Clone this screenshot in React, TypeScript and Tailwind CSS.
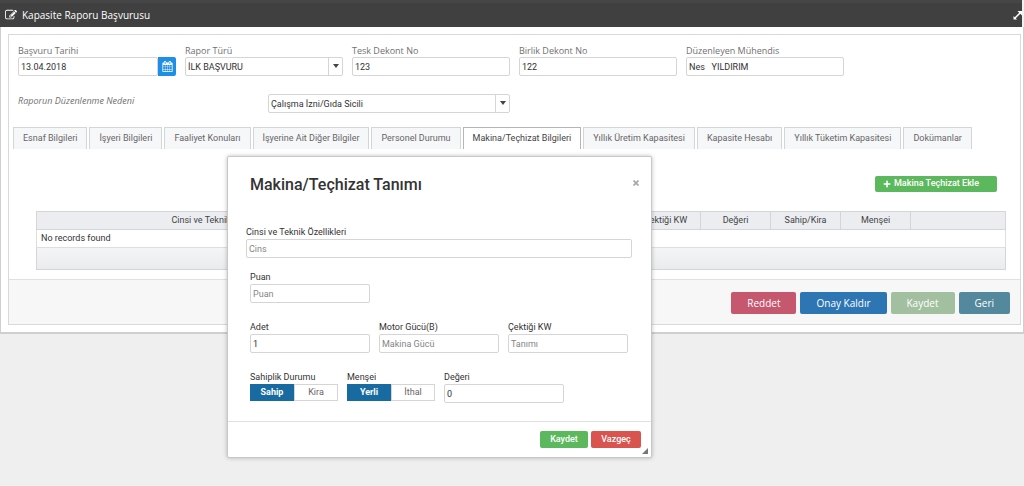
import React, { useState } from "react";
import { FaPlus } from "react-icons/fa";

const tabs = [
  "Esnaf Bilgileri",
  "İşyeri Bilgileri",
  "Faaliyet Konuları",
  "İşyerine Ait Diğer Bilgiler",
  "Personel Durumu",
  "Makina/Teçhizat Bilgileri",
  "Yıllık Üretim Kapasitesi",
  "Kapasite Hesabı",
  "Yıllık Tüketim Kapasitesi",
  "Dokümanlar",
];

const columns = [
  { name: "Cinsi ve Teknik Özellikleri", class: "" },
  { name: "Puan", class: "w-[70px]" },
  { name: "Adet", class: "w-[70px]" },
  { name: "Motor Gücü", class: "w-[84px]" },
  { name: "Çektiği KW", class: "w-[70px]" },
  { name: "Değeri", class: "w-[70px]" },
  { name: "Sahip/Kira", class: "w-[70px]" },
  { name: "Menşei", class: "w-[70px]" },
  { name: "", class: "w-[95px]" },
];

const actions = [
  { name: "Reddet", class: "bg-[#c5576f]" },
  { name: "Onay Kaldır", class: "bg-[#2e75b3]" },
  { name: "Kaydet", class: "bg-[#a2bf9f]" },
  { name: "Geri", class: "bg-[#54889d]" },
];

const EditIcon = () => (
  <svg viewBox="0 0 1792 1792" className="w-3 h-3 fill-white" aria-hidden="true">
    <path d="M888 1184l116-116-152-152-116 116v56h96v96h56zm440-720q-16-16-33 1l-350 350q-17 17-1 33t33-1l350-350q17-17 1-33zm80 594v190q0 119-84.5 203.5t-203.5 84.5h-832q-119 0-203.5-84.5t-84.5-203.5v-832q0-119 84.5-203.5t203.5-84.5h832q63 0 117 25 15 7 18 23 3 17-9 29l-49 49q-14 14-32 8-23-6-45-6h-832q-66 0-113 47t-47 113v832q0 66 47 113t113 47h832q66 0 113-47t47-113v-126q0-13 9-22l64-64q15-15 35-7t20 29zm-96-738l288 288-672 672h-288v-288zm444 132l-92 92-288-288 92-92q28-28 68-28t68 28l152 152q28 28 28 68t-28 68z" />
  </svg>
);

const CalendarIcon = () => (
  <svg viewBox="0 0 1792 1792" className="w-[11px] h-[11px] fill-white" aria-hidden="true">
    <path d="M192 1664h288v-288h-288v288zm352 0h320v-288h-320v288zm-352-352h288v-320h-288v320zm352 0h320v-320h-320v320zm-352-384h288v-288h-288v288zm736 736h320v-288h-320v288zm-384-736h320v-288h-320v288zm768 736h288v-288h-288v288zm-384-352h320v-320h-320v320zm-352-864v-288q0-13-9.5-22.5t-22.5-9.5h-64q-13 0-22.5 9.5t-9.5 22.5v288q0 13 9.5 22.5t22.5 9.5h64q13 0 22.5-9.5t9.5-22.5zm736 864h288v-320h-288v320zm-384-384h320v-288h-320v288zm384 0h288v-288h-288v288zm32-480v-288q0-13-9.5-22.5t-22.5-9.5h-64q-13 0-22.5 9.5t-9.5 22.5v288q0 13 9.5 22.5t22.5 9.5h64q13 0 22.5-9.5t9.5-22.5zm384-64v1280q0 52-38 90t-90 38h-1408q-52 0-90-38t-38-90v-1280q0-52 38-90t90-38h128v-96q0-66 47-113t113-47h64q66 0 113 47t47 113v96h384v-96q0-66 47-113t113-47h64q66 0 113 47t47 113v96h128q52 0 90 38t38 90z" />
  </svg>
);

const inputClass =
  "block w-full min-w-0 h-[19px] px-[2px] border border-[#d5d5d5] rounded-[2px] bg-white text-[9px] leading-4 text-[#333] placeholder:text-[#858585] outline-none";

const labelClass =
  "block font-['Open_Sans',sans-serif] text-[9px] leading-[13px] text-[#707070]";

type FieldProps = {
  id: string;
  label: string;
  value?: string;
  placeholder?: string;
};

/* Field of the page form */
const Field = ({ id, label, value }: FieldProps) => (
  <div className="w-[158px]">
    <label htmlFor={id} className={labelClass}>
      {label}
    </label>
    <input id={id} defaultValue={value} className={inputClass} />
  </div>
);

/* Field of the dialog form */
const DialogField = ({ id, label, value, placeholder }: FieldProps) => (
  <div className="w-full">
    <label htmlFor={id} className="block text-[9px] leading-[13px] text-[#333]">
      {label}
    </label>
    <input
      id={id}
      defaultValue={value}
      placeholder={placeholder}
      className={inputClass}
    />
  </div>
);

const Dropdown = ({ id, options }: { id: string; options: string[] }) => (
  <div className="relative">
    <select id={id} className={`${inputClass} appearance-none`}>
      {options.map((o) => (
        <option key={o}>{o}</option>
      ))}
    </select>
    <span className="absolute right-0 top-0 w-[15px] h-[19px] pb-[2px] border-l border-[#d5d5d5] flex items-center justify-center pointer-events-none">
      <svg viewBox="0 0 6 4" className="w-[6px] h-1 fill-[#444]" aria-hidden="true">
        <path d="M0 0h6L3 4z" />
      </svg>
    </span>
  </div>
);

type ToggleProps = { name: string; legend: string; options: string[] };

const Toggle = ({ name, legend, options }: ToggleProps) => {
  const [selected, setSelected] = useState(options[0]);

  return (
    <fieldset className="w-[88px]">
      <legend className="text-[9px] leading-[13px] text-[#333] whitespace-nowrap">
        {legend}
      </legend>
      <div className="flex h-[17px]">
        {options.map((o) => (
          <label
            key={o}
            className={`relative flex-1 flex items-center justify-center border text-[9px] cursor-pointer ${
              selected === o
                ? "bg-[#186ba0] border-[#186ba0] text-white font-bold"
                : "bg-white border-[#d5d5d5] text-[#666]"
            }`}
          >
            <input
              type="radio"
              name={name}
              checked={selected === o}
              onChange={() => setSelected(o)}
              className="sr-only"
            />
            {o}
          </label>
        ))}
      </div>
    </fieldset>
  );
};

const MachineDialog = () => (
  <div
    role="dialog"
    aria-labelledby="dialog-title"
    className="absolute left-[227px] top-[156px] w-[425px] bg-white border border-[#c8c8c8] rounded-[2px] shadow-[0_0_4px_rgba(0,0,0,0.25)]"
  >
    <div className="flex items-center justify-between pl-[22px] pr-[10px] pt-4">
      <h2 id="dialog-title" className="text-[16px] leading-6 font-medium text-[#333]">
        Makina/Teçhizat Tanımı
      </h2>
      <button aria-label="Kapat" className="w-2 pb-1">
        <svg viewBox="0 0 6 6" className="w-[6px] h-[6px] stroke-[#aaa]" aria-hidden="true">
          <path d="M0.5 0.5l5 5M5.5 0.5l-5 5" strokeWidth="1.8" />
        </svg>
      </button>
    </div>

    <div className="pl-[18px] pr-[19px] pt-[29px]">
      <DialogField id="cins" label="Cinsi ve Teknik Özellikleri" placeholder="Cins" />
    </div>

    <div className="pl-[22px] pr-[23px] pt-[13px] pb-[18px] flex flex-col gap-[18px]">
      <div className="grid grid-cols-3 gap-[9px]">
        <DialogField id="puan" label="Puan" placeholder="Puan" />
      </div>
      <div className="grid grid-cols-3 gap-[9px]">
        <DialogField id="adet" label="Adet" value="1" />
        <DialogField id="motor" label="Motor Gücü(B)" placeholder="Makina Gücü" />
        <DialogField id="kw" label="Çektiği KW" placeholder="Tanımı" />
      </div>
      <div className="flex gap-[9px]">
        <Toggle name="sahiplik" legend="Sahiplik Durumu" options={["Sahip", "Kira"]} />
        <Toggle name="mensei" legend="Menşei" options={["Yerli", "İthal"]} />
        <div className="w-[120px]">
          <DialogField id="deger" label="Değeri" value="0" />
        </div>
      </div>
    </div>

    <div className="relative flex justify-end gap-[3px] border-t border-[#e0e0e0] pt-[9px] pr-[10px] pb-[9px]">
      <button className="h-[17px] w-12 rounded-[2px] bg-[#5cb85c] text-[9px] font-medium text-white">
        Kaydet
      </button>
      <button className="h-[17px] w-[50px] rounded-[2px] bg-[#d9534f] text-[9px] font-medium text-white">
        Vazgeç
      </button>
      {/* Resize grip */}
      <svg
        viewBox="0 0 6 6"
        className="absolute right-[3px] bottom-[3px] w-[6px] h-[6px] fill-[#777]"
        aria-hidden="true"
      >
        <path d="M6 0v6H0z" />
      </svg>
    </div>
  </div>
);

const App = () => {
  const [activeTab, setActiveTab] = useState("Makina/Teçhizat Bilgileri");

  return (
    <div className="relative min-h-screen bg-[#efefef] font-[Roboto,sans-serif] text-[#333]">
      <header className="flex items-center h-[27px] mr-[2px] pl-[5px] bg-[#404040] border-t-[3px] border-[#464646]">
        <EditIcon />
        <h1 className="flex-1 pl-[5px] font-['Open_Sans',sans-serif] text-[10px] leading-4 text-white">
          Kapasite Raporu Başvurusu
        </h1>
        <button aria-label="Tam ekran" className="w-[9px]">
          <svg viewBox="0 0 9 9" className="w-[9px] h-[9px] fill-white" aria-hidden="true">
            <path d="M4.500 0H9v4.500L7.300 2.800 2.800 7.300 4 8.500H0.500V5L1.700 6.200 6.200 1.700z" />
          </svg>
        </button>
      </header>

      <main className="bg-white border border-t-0 border-b-2 border-[#cfcfcf] pt-[7px] pl-[7px] pr-[2px] pb-[7px]">
        <div className="border border-[#d9d9d9]">
          <section className="pl-[9px] pt-[9px]">
            <div className="flex flex-wrap gap-[9px]">
              <div className="w-[158px]">
                <label htmlFor="tarih" className={labelClass}>
                  Başvuru Tarihi
                </label>
                <div className="flex">
                  <input id="tarih" defaultValue="13.04.2018" className={inputClass} />
                  <button
                    aria-label="Takvim"
                    className="flex shrink-0 items-center justify-center w-[18px] h-[19px] rounded-r-[2px] bg-[#1f8fe5]"
                  >
                    <CalendarIcon />
                  </button>
                </div>
              </div>
              <div className="w-[158px]">
                <label htmlFor="tur" className={labelClass}>
                  Rapor Türü
                </label>
                <Dropdown id="tur" options={["İLK BAŞVURU"]} />
              </div>
              <Field id="tesk" label="Tesk Dekont No" value="123" />
              <Field id="birlik" label="Birlik Dekont No" value="122" />
              <Field id="muhendis" label="Düzenleyen Mühendis" value="Nes   YILDIRIM" />
            </div>

            <div className="flex pt-[18px]">
              <label htmlFor="neden" className={`${labelClass} w-[250px] italic`}>
                Raporun Düzenlenme Nedeni
              </label>
              <div className="w-[242px]">
                <Dropdown id="neden" options={["Çalışma İzni/Gıda Sicili"]} />
              </div>
            </div>
          </section>

          <nav role="tablist" className="flex gap-[2px] pl-1 pt-[14px]">
            {tabs.map((t) => (
              <button
                key={t}
                role="tab"
                aria-selected={activeTab === t}
                onClick={() => setActiveTab(t)}
                className={`h-[22px] px-[9px] border border-b-0 text-[9px] whitespace-nowrap ${
                  activeTab === t
                    ? "bg-white border-[#b5b5b5] text-[#444]"
                    : "bg-[#f6f7f9] border-[#d3d6d9] text-[#666]"
                }`}
              >
                {t}
              </button>
            ))}
          </nav>

          <section className="pl-[27px] pr-[14px] pt-[27px] pb-[9px]">
            <div className="flex justify-end pr-[9px]">
              <button className="flex items-center gap-[3px] w-[122px] h-4 pl-2 rounded-[2px] bg-[#5cb85c] text-[9px] font-medium text-white whitespace-nowrap">
                <FaPlus className="w-2 h-2" />
                Makina Teçhizat Ekle
              </button>
            </div>

            <table className="w-full mt-[19px] table-fixed border-collapse text-[9px] leading-[14px]">
              <thead>
                <tr className="h-[18px] bg-[#ebedf0]">
                  {columns.map((c, i) => (
                    <th
                      key={i}
                      className={`${c.class} p-0 pb-[2px] border border-[#d3d5d8] font-normal text-[#444] whitespace-nowrap`}
                    >
                      {c.name}
                    </th>
                  ))}
                </tr>
              </thead>
              <tbody>
                <tr className="h-[18px]">
                  <td colSpan={9} className="pt-0 pb-[2px] px-1 border border-[#dcdee0]">
                    No records found
                  </td>
                </tr>
              </tbody>
              <tfoot>
                <tr className="h-[22px] bg-linear-to-b from-[#f4f5f6] to-[#e9ebed]">
                  <td colSpan={9} className="p-0 border border-[#d3d5d8]"></td>
                </tr>
              </tfoot>
            </table>
          </section>

          <footer className="flex justify-end gap-1 border-t border-[#e0e0e0] bg-[#f7f7f7] pt-3 pr-[10px] pb-[10px]">
            {actions.map((a) => (
              <button
                key={a.name}
                className={`${a.class} h-[22px] px-4 rounded-[2px] font-['Open_Sans',sans-serif] text-[10px] text-white`}
              >
                {a.name}
              </button>
            ))}
          </footer>
        </div>
      </main>

      <MachineDialog />
    </div>
  );
};

export default App;
